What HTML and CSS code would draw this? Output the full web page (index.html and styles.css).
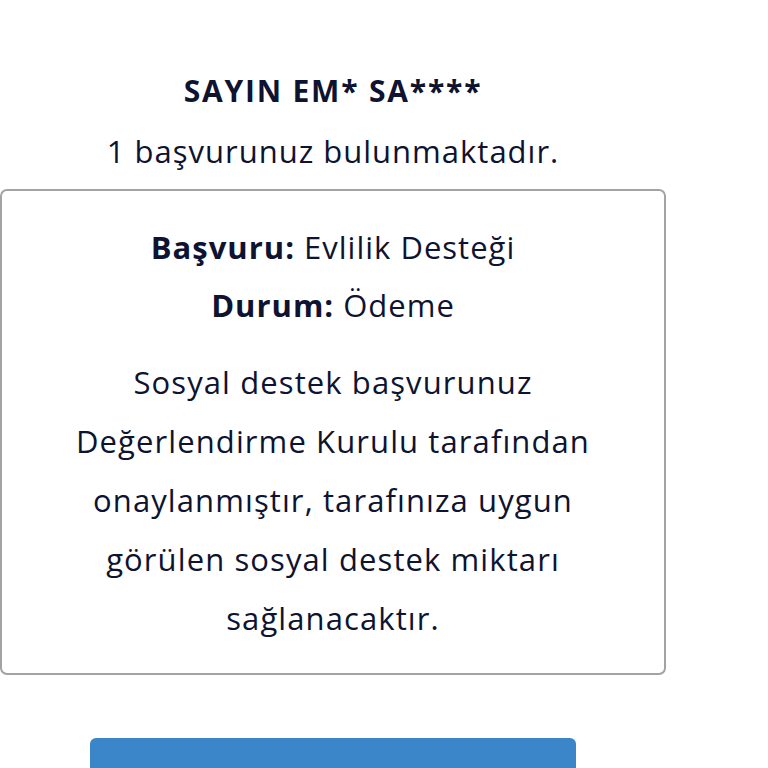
FILE: index.html
```html
<!DOCTYPE html>
<html lang="tr">
<head>
    <meta charset="UTF-8">
    <meta name="viewport" content="width=device-width, initial-scale=1.0">
    <title>Başvuru Durumu</title>
    <link rel="stylesheet" href="styles.css">
</head>
<body>

<div class="page">
    <h1 class="greeting">SAYIN EM* SA****</h1>
    <p class="count">1 başvurunuz bulunmaktadır.</p>

    <!-- Application card -->
    <div class="card">
        <p class="field"><b>Başvuru:</b> Evlilik Desteği</p>
        <p class="field"><b>Durum:</b> Ödeme</p>
        <p class="message">Sosyal destek başvurunuz Değerlendirme Kurulu tarafından onaylanmıştır, tarafınıza uygun görülen sosyal destek miktarı sağlanacaktır.</p>
    </div>

    <div class="actions">
        <button type="button" class="primary"></button>
    </div>
</div>

</body>
</html>
```

FILE: styles.css
```css
body {
    font-family: "Open Sans", "Noto Sans", sans-serif;
    margin: 0;
    background-color: #fff;
    color: #0d1330;
    overflow: hidden;
}
.page {
    width: 666px;
    text-align: center;
    padding-top: 70px;
}
.greeting {
    font-size: 30px;
    font-weight: 700;
    line-height: 42px;
    margin: 0;
    letter-spacing: 1.8px;
}
.count {
    font-size: 31px;
    line-height: 45px;
    margin: 17px 0 0;
    letter-spacing: 1px;
}
.card {
    margin-top: 15px;
    border: 2px solid #a3a3a3;
    border-radius: 7px;
    padding: 27px 50px 25px;
}
.field {
    font-size: 31px;
    line-height: 58px;
    margin: 0;
    letter-spacing: 1px;
}
.field b {
    font-weight: 700;
}
.message {
    font-size: 31px;
    line-height: 59px;
    margin: 19px 0 0;
    letter-spacing: 1.1px;
}
.actions {
    margin-top: 63px;
    display: flex;
    justify-content: center;
}
button {
    border: none;
    border-radius: 6px;
    cursor: pointer;
    font-size: 1em;
}
.primary {
    width: 486px;
    height: 60px;
    background-color: #3a86c8;
    color: white;
}
```
